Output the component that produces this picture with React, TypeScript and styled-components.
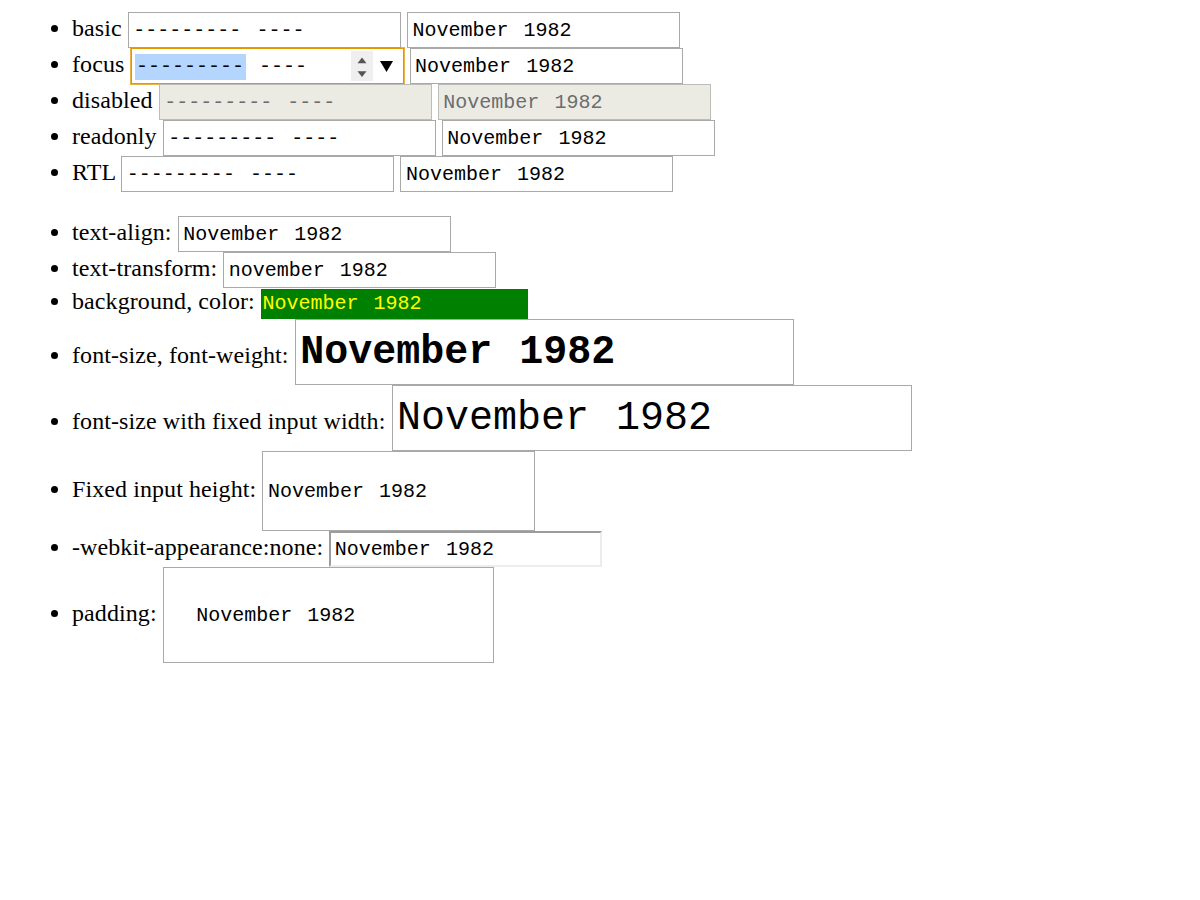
import React from "react";
import styled, { createGlobalStyle, css } from "styled-components";

const GlobalStyle = createGlobalStyle`
  html, body { margin: 0; padding: 0; background: #ffffff; }
  body { font-family: "Liberation Serif", "Times New Roman", serif; color: #000; }
`;

const Page = styled.div`
  padding: 12px;
`;

const List = styled.ul<{ $gapTop?: boolean }>`
  margin: ${(p) => (p.$gapTop ? "24px 0 0" : "0")};
  padding-left: 60px;
  font-family: "Liberation Serif", "Times New Roman", serif;
  font-size: 24px;
  list-style: disc;
`;

const Item = styled.li`
  white-space: nowrap;
  letter-spacing: 0.085px;
`;

const MonthBox = styled.span`
  display: inline-flex;
  align-items: center;
  box-sizing: border-box;
  width: 273px;
  height: 36px;
  padding: 2px 0 0 3px;
  border: 1px solid #a9a9a9;
  background: #ffffff;
  color: #000000;
  font-family: "Liberation Mono", "Courier New", monospace;
  font-size: 20px;
  letter-spacing: 0;
  vertical-align: baseline;
  overflow: hidden;
`;

const FocusedBox = styled(MonthBox)`
  border-color: #e59700;
  outline: 1px solid rgba(229, 151, 0, 0.75);
  padding-right: 10px;
`;

const DisabledBox = styled(MonthBox)`
  background: #ebebe4;
  color: #6d6d6d;
  border-color: #bdbdb8;
`;

const LowerBox = styled(MonthBox)`
  text-transform: lowercase;
`;

const ColoredBox = styled(MonthBox)`
  width: 267px;
  height: 30px;
  padding: 1px 0 0 0;
  border: none;
  background: #008000;
  color: #ffff00;
`;

const BigBox = styled(MonthBox)<{ $bold?: boolean; $width: number }>`
  width: ${(p) => p.$width}px;
  height: 66px;
  font-size: 40px;
  ${(p) =>
    p.$bold &&
    css`
      font-weight: 700;
    `}
`;

const TallBox = styled(MonthBox)`
  height: 80px;
`;

const FlatBox = styled(MonthBox)`
  border-width: 2px;
  border-style: solid;
  border-color: #9c9c9c #ececec #ececec #9c9c9c;
  padding-left: 2px;
`;

const PaddedBox = styled(MonthBox)`
  width: 331px;
  height: 96px;
  padding: 31px 30px 29px 31px;
`;

const Segment = styled.span<{ $selected?: boolean }>`
  display: inline-block;
  padding: 0 1.5px;
  line-height: 26px;
  white-space: pre;
  background: ${(p) => (p.$selected ? "#b4d5fe" : "transparent")};
`;

const Sep = styled.span`
  white-space: pre;
  line-height: 26px;
`;

const Spin = styled.span`
  display: inline-flex;
  align-self: center;
  margin-top: -2px;
  margin-left: auto;
  width: 22px;
  height: 30px;
  background: #efefef;
  flex: none;
`;

const Picker = styled.span`
  display: inline-flex;
  margin-top: -2px;
  margin-left: 7px;
  width: 13px;
  height: 11px;
  flex: none;
`;

function Fields({ month, year, selected }: { month: string; year: string; selected?: boolean }) {
  return (
    <>
      <Segment $selected={selected}>{month}</Segment>
      <Sep> </Sep>
      <Segment>{year}</Segment>
    </>
  );
}

const EMPTY_MONTH = "---------";
const EMPTY_YEAR = "----";

function Empty() {
  return <Fields month={EMPTY_MONTH} year={EMPTY_YEAR} />;
}

function Filled() {
  return <Fields month="November" year="1982" />;
}

function SpinButton() {
  return (
    <Spin>
      <svg width="22" height="30" viewBox="0 0 22 30">
        <polygon points="6.5,12.2 11,6.4 15.5,12.2" fill="#555555" />
        <polygon points="6.5,20.2 11,26 15.5,20.2" fill="#555555" />
      </svg>
    </Spin>
  );
}

function PickerIndicator() {
  return (
    <Picker>
      <svg width="13" height="11" viewBox="0 0 13 11">
        <polygon points="0,0 13,0 6.5,11" fill="#000" />
      </svg>
    </Picker>
  );
}

export default function App() {
  return (
    <Page>
      <GlobalStyle />
      <List>
        <Item>
          basic{" "}
          <MonthBox>
            <Empty />
          </MonthBox>{" "}
          <MonthBox>
            <Filled />
          </MonthBox>
        </Item>
        <Item>
          focus{" "}
          <FocusedBox>
            <Fields month={EMPTY_MONTH} year={EMPTY_YEAR} selected />
            <SpinButton />
            <PickerIndicator />
          </FocusedBox>{" "}
          <MonthBox>
            <Filled />
          </MonthBox>
        </Item>
        <Item>
          disabled{" "}
          <DisabledBox>
            <Empty />
          </DisabledBox>{" "}
          <DisabledBox>
            <Filled />
          </DisabledBox>
        </Item>
        <Item>
          readonly{" "}
          <MonthBox>
            <Empty />
          </MonthBox>{" "}
          <MonthBox>
            <Filled />
          </MonthBox>
        </Item>
        <Item>
          RTL{" "}
          <MonthBox>
            <Empty />
          </MonthBox>{" "}
          <MonthBox>
            <Filled />
          </MonthBox>
        </Item>
      </List>
      <List $gapTop>
        <Item>
          text-align:{" "}
          <MonthBox>
            <Filled />
          </MonthBox>
        </Item>
        <Item>
          text-transform:{" "}
          <LowerBox>
            <Filled />
          </LowerBox>
        </Item>
        <Item>
          background, color:{" "}
          <ColoredBox>
            <Filled />
          </ColoredBox>
        </Item>
        <Item>
          font-size, font-weight:{" "}
          <BigBox $bold $width={499}>
            <Filled />
          </BigBox>
        </Item>
        <Item>
          font-size with fixed input width:{" "}
          <BigBox $width={520}>
            <Filled />
          </BigBox>
        </Item>
        <Item>
          Fixed input height:{" "}
          <TallBox>
            <Filled />
          </TallBox>
        </Item>
        <Item>
          -webkit-appearance:none:{" "}
          <FlatBox>
            <Filled />
          </FlatBox>
        </Item>
        <Item>
          padding:{" "}
          <PaddedBox>
            <Filled />
          </PaddedBox>
        </Item>
      </List>
    </Page>
  );
}
